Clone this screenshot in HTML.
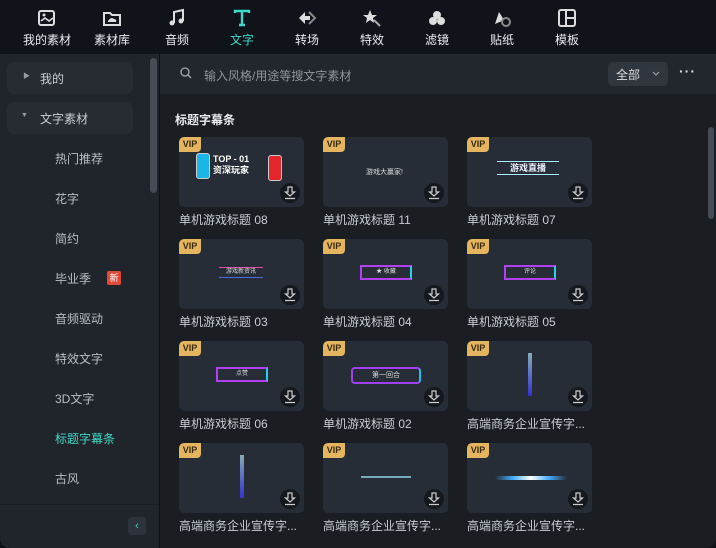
<!DOCTYPE html>
<html><head><meta charset="utf-8"><style>
*{margin:0;padding:0;box-sizing:border-box}
body{width:716px;height:548px;background:#0d1014;font-family:"Liberation Sans","Noto Sans CJK SC",sans-serif;position:relative;overflow:hidden;color:#cfd4da}
.top{position:absolute;left:0;top:0;width:716px;height:54px;background:#10141a}
.tab{position:absolute;top:0;width:60px;height:54px;text-align:center;font-size:12px;color:#e8ebee}
.tab .ic{position:absolute;left:50%;top:8px;transform:translateX(-50%)}
.tab span{position:absolute;left:0;right:0;top:31px}
.side{position:absolute;left:0;top:54px;width:159px;height:494px;background:#20252c;border-radius:0 0 0 10px}
.sb{position:absolute;left:7px;width:126px;height:32px;background:#272c33;border-radius:7px;font-size:12px;color:#c9ced4}
.item{position:absolute;left:55px;font-size:12px;color:#b8bec5}
.main{position:absolute;left:160px;top:54px;width:556px;height:494px;background:#1a1d21;border-radius:0 0 10px 0}
.search{position:absolute;left:0;top:0;width:556px;height:40px;background:#22272e}
.card{position:absolute;width:125px}
.th{width:125px;height:70px;background:#262d36;border-radius:5px;position:relative;overflow:hidden}
.vip{position:absolute;left:0;top:0;width:22px;height:15px;background:#e2b55e;border-radius:4px 0 4px 0;font-size:9px;font-weight:bold;color:#3a2a10;text-align:center;line-height:15px}
.dl{position:absolute;right:4px;bottom:4px;width:20px;height:20px;border-radius:50%;background:#15181c}
.dl svg{position:absolute;left:4px;top:3px}
.lb{font-size:12px;color:#c9ced4;margin-top:4px;white-space:nowrap}
</style></head><body>
<div class="top">
 <div class="tab" style="left:17px"><svg class="ic" width="20" height="20" viewBox="0 0 20 20"><rect x="2" y="3" width="15" height="14" rx="2" fill="none" stroke="#ddd" stroke-width="2"/><path d="M4 13 L8 10 L12 13 L16 10" stroke="#ddd" stroke-width="1.6" fill="none"/><circle cx="7" cy="7" r="1.5" fill="#ddd"/></svg><span>我的素材</span></div>
 <div class="tab" style="left:82px"><svg class="ic" width="20" height="20" viewBox="0 0 20 20"><path d="M2 5 h6 l2 2 h8 v10 h-16z" fill="none" stroke="#ddd" stroke-width="2"/><path d="M6 14 h8 a2 2 0 0 0 -2-3 a3 3 0 0 0 -5 1 a1.5 1.5 0 0 0 -1 2z" fill="#ddd"/></svg><span>素材库</span></div>
 <div class="tab" style="left:147px"><svg class="ic" width="20" height="20" viewBox="0 0 20 20"><path d="M7 15 V4 L16 2 V13" stroke="#ddd" stroke-width="2" fill="none"/><circle cx="5" cy="15" r="2.5" fill="#ddd"/><circle cx="14" cy="13" r="2.5" fill="#ddd"/></svg><span>音频</span></div>
 <div class="tab" style="left:212px;color:#3fd8c6"><svg class="ic" width="20" height="20" viewBox="0 0 20 20"><path d="M3 5 V3 H17 V5 M10 3 V17 M7 17 H13" stroke="#3fd8c6" stroke-width="2.4" fill="none"/></svg><span>文字</span></div>
 <div class="tab" style="left:277px"><svg class="ic" width="22" height="20" viewBox="0 0 22 20"><path d="M9 4 L3 10 L9 16 V12 H14 V8 H9z" fill="#ddd"/><path d="M13 4 L19 10 L13 16" stroke="#888" stroke-width="2" fill="none"/></svg><span>转场</span></div>
 <div class="tab" style="left:342px"><svg class="ic" width="20" height="20" viewBox="0 0 20 20"><path d="M8 2 L10 7 L15 7 L11 10 L12 15 L8 12 L4 15 L5 10 L1 7 L6 7z" fill="#ddd"/><path d="M12 12 L18 18" stroke="#aaa" stroke-width="2"/></svg><span>特效</span></div>
 <div class="tab" style="left:407px"><svg class="ic" width="20" height="20" viewBox="0 0 20 20"><circle cx="10" cy="7" r="4" fill="#ddd"/><circle cx="6" cy="13" r="4" fill="#ddd"/><circle cx="14" cy="13" r="4" fill="#ddd"/></svg><span>滤镜</span></div>
 <div class="tab" style="left:472px"><svg class="ic" width="20" height="20" viewBox="0 0 20 20"><path d="M3 16 L7 4 L12 12z" fill="#ddd"/><circle cx="14" cy="14" r="4" fill="none" stroke="#888" stroke-width="2"/></svg><span>贴纸</span></div>
 <div class="tab" style="left:537px"><svg class="ic" width="20" height="20" viewBox="0 0 20 20"><rect x="2" y="2" width="16" height="16" rx="2" fill="none" stroke="#ddd" stroke-width="2"/><path d="M9 2 V18 M9 10 H18" stroke="#ddd" stroke-width="2"/></svg><span>模板</span></div>
</div>
<div class="side">
 <div class="sb" style="top:8px"><span style="position:absolute;left:16px;top:9px;font-size:7px;color:#999">▶</span><span style="position:absolute;left:33px;top:8px">我的</span></div>
 <div class="sb" style="top:48px"><span style="position:absolute;left:14px;top:10px;font-size:7px;color:#999">▼</span><span style="position:absolute;left:33px;top:8px">文字素材</span></div>
 <div class="item" style="top:96px">热门推荐</div>
 <div class="item" style="top:136px">花字</div>
 <div class="item" style="top:176px">简约</div>
 <div class="item" style="top:216px">毕业季</div>
 <div style="position:absolute;left:107px;top:217px;width:14px;height:14px;background:#e04a3a;border-radius:2px;font-size:9px;color:#fff;text-align:center;line-height:14px">新</div>
 <div class="item" style="top:256px">音频驱动</div>
 <div class="item" style="top:296px">特效文字</div>
 <div class="item" style="top:336px">3D文字</div>
 <div class="item" style="top:376px;color:#3fd8c6">标题字幕条</div>
 <div class="item" style="top:416px">古风</div>
 <div style="position:absolute;left:0;top:450px;width:159px;height:1px;background:#1a1e23"></div>
 <div style="position:absolute;left:128px;top:463px;width:18px;height:18px;background:#2c333b;border-radius:4px;color:#3fd8c6;font-size:11px;text-align:center;line-height:18px">‹</div>
 <div style="position:absolute;left:150px;top:4px;width:7px;height:135px;background:#454c55;border-radius:4px"></div>
</div>
<div class="main">
 <div class="search">
  <svg style="position:absolute;left:20px;top:13px" width="12" height="12" viewBox="0 0 12 12"><circle cx="5" cy="5" r="4" fill="none" stroke="#aaa" stroke-width="1.3"/><path d="M8 8 L11 11" stroke="#aaa" stroke-width="1.3"/></svg>
  <span style="position:absolute;left:44px;top:13px;font-size:12px;color:#8d949c">输入风格/用途等搜文字素材</span>
  <div style="position:absolute;left:448px;top:8px;width:60px;height:24px;background:#30363e;border-radius:5px"><span style="position:absolute;left:8px;top:4px;font-size:12px;color:#ddd">全部</span><svg style="position:absolute;left:44px;top:9px" width="8" height="5" viewBox="0 0 8 5"><path d="M1 1 L4 4 L7 1" stroke="#aaa" fill="none"/></svg></div>
  <span style="position:absolute;left:519px;top:9px;font-size:14px;color:#ddd;letter-spacing:1px;font-weight:bold">···</span>
 </div>
 <div style="position:absolute;left:15px;top:57px;font-size:12px;font-weight:bold;color:#e8ebee">标题字幕条</div>
 <div style="position:absolute;left:548px;top:73px;width:6px;height:92px;background:#454c55;border-radius:3px"></div>
</div>
<div class="card" style="left:179px;top:137px"><div class="th"><div class="vip">VIP</div><div style="position:absolute;left:17px;top:16px;width:14px;height:26px;background:#19b7e8;border-radius:3px;border:1px solid #ccc"></div><div style="position:absolute;left:34px;top:17px;font-size:9px;font-weight:bold;color:#fff;line-height:11px">TOP - 01<br>资深玩家</div><div style="position:absolute;left:89px;top:18px;width:14px;height:26px;background:#e3262b;border-radius:3px;border:1px solid #ccc"></div><div class="dl"><svg width="12" height="14" viewBox="0 0 12 14"><path d="M4 1 H8 V6 H10.5 L6 10 L1.5 6 H4z" fill="none" stroke="#ccc" stroke-width="1.2"/><path d="M1 12.5 H11" stroke="#ccc" stroke-width="1.3"/></svg></div></div><div class="lb">单机游戏标题 08</div></div>
<div class="card" style="left:323px;top:137px"><div class="th"><div class="vip">VIP</div><div style="position:absolute;left:43px;top:30px;font-size:7px;color:#ddd">游戏大赢家!</div><div class="dl"><svg width="12" height="14" viewBox="0 0 12 14"><path d="M4 1 H8 V6 H10.5 L6 10 L1.5 6 H4z" fill="none" stroke="#ccc" stroke-width="1.2"/><path d="M1 12.5 H11" stroke="#ccc" stroke-width="1.3"/></svg></div></div><div class="lb">单机游戏标题 11</div></div>
<div class="card" style="left:467px;top:137px"><div class="th"><div class="vip">VIP</div><div style="position:absolute;left:30px;top:24px;width:62px;height:14px;border-top:1px solid #aef;border-bottom:1px solid #aef;font-size:9px;color:#eef;text-align:center;line-height:12px;font-weight:bold">游戏直播</div><div class="dl"><svg width="12" height="14" viewBox="0 0 12 14"><path d="M4 1 H8 V6 H10.5 L6 10 L1.5 6 H4z" fill="none" stroke="#ccc" stroke-width="1.2"/><path d="M1 12.5 H11" stroke="#ccc" stroke-width="1.3"/></svg></div></div><div class="lb">单机游戏标题 07</div></div>
<div class="card" style="left:179px;top:239px"><div class="th"><div class="vip">VIP</div><div style="position:absolute;left:40px;top:28px;width:44px;height:11px;border-top:1px solid #e04ab0;border-bottom:1px solid #4a6ae0;font-size:6px;color:#ddd;text-align:center;line-height:9px">游戏新资讯</div><div class="dl"><svg width="12" height="14" viewBox="0 0 12 14"><path d="M4 1 H8 V6 H10.5 L6 10 L1.5 6 H4z" fill="none" stroke="#ccc" stroke-width="1.2"/><path d="M1 12.5 H11" stroke="#ccc" stroke-width="1.3"/></svg></div></div><div class="lb">单机游戏标题 03</div></div>
<div class="card" style="left:323px;top:239px"><div class="th"><div class="vip">VIP</div><div style="position:absolute;left:37px;top:26px;width:52px;height:15px;border:2px solid #b040f0;border-right-color:#20d0f0;font-size:6px;color:#ddd;text-align:center;line-height:11px">★ 收藏</div><div class="dl"><svg width="12" height="14" viewBox="0 0 12 14"><path d="M4 1 H8 V6 H10.5 L6 10 L1.5 6 H4z" fill="none" stroke="#ccc" stroke-width="1.2"/><path d="M1 12.5 H11" stroke="#ccc" stroke-width="1.3"/></svg></div></div><div class="lb">单机游戏标题 04</div></div>
<div class="card" style="left:467px;top:239px"><div class="th"><div class="vip">VIP</div><div style="position:absolute;left:37px;top:26px;width:52px;height:15px;border:2px solid #b040f0;border-right-color:#20d0f0;font-size:6px;color:#ddd;text-align:center;line-height:11px">评论</div><div class="dl"><svg width="12" height="14" viewBox="0 0 12 14"><path d="M4 1 H8 V6 H10.5 L6 10 L1.5 6 H4z" fill="none" stroke="#ccc" stroke-width="1.2"/><path d="M1 12.5 H11" stroke="#ccc" stroke-width="1.3"/></svg></div></div><div class="lb">单机游戏标题 05</div></div>
<div class="card" style="left:179px;top:341px"><div class="th"><div class="vip">VIP</div><div style="position:absolute;left:37px;top:26px;width:52px;height:15px;border:2px solid #b040f0;border-right-color:#20d0f0;font-size:6px;color:#ddd;text-align:center;line-height:11px">点赞</div><div class="dl"><svg width="12" height="14" viewBox="0 0 12 14"><path d="M4 1 H8 V6 H10.5 L6 10 L1.5 6 H4z" fill="none" stroke="#ccc" stroke-width="1.2"/><path d="M1 12.5 H11" stroke="#ccc" stroke-width="1.3"/></svg></div></div><div class="lb">单机游戏标题 06</div></div>
<div class="card" style="left:323px;top:341px"><div class="th"><div class="vip">VIP</div><div style="position:absolute;left:28px;top:26px;width:70px;height:17px;border:2px solid #a040f0;border-right-color:#20c0f0;border-radius:4px;font-size:7px;color:#ddd;text-align:center;line-height:13px">第一回合</div><div class="dl"><svg width="12" height="14" viewBox="0 0 12 14"><path d="M4 1 H8 V6 H10.5 L6 10 L1.5 6 H4z" fill="none" stroke="#ccc" stroke-width="1.2"/><path d="M1 12.5 H11" stroke="#ccc" stroke-width="1.3"/></svg></div></div><div class="lb">单机游戏标题 02</div></div>
<div class="card" style="left:467px;top:341px"><div class="th"><div class="vip">VIP</div><div style="position:absolute;left:61px;top:12px;width:4px;height:43px;background:linear-gradient(#8ab,#33c)"></div><div class="dl"><svg width="12" height="14" viewBox="0 0 12 14"><path d="M4 1 H8 V6 H10.5 L6 10 L1.5 6 H4z" fill="none" stroke="#ccc" stroke-width="1.2"/><path d="M1 12.5 H11" stroke="#ccc" stroke-width="1.3"/></svg></div></div><div class="lb">高端商务企业宣传字...</div></div>
<div class="card" style="left:179px;top:443px"><div class="th"><div class="vip">VIP</div><div style="position:absolute;left:61px;top:12px;width:4px;height:43px;background:linear-gradient(#8ab,#33c)"></div><div class="dl"><svg width="12" height="14" viewBox="0 0 12 14"><path d="M4 1 H8 V6 H10.5 L6 10 L1.5 6 H4z" fill="none" stroke="#ccc" stroke-width="1.2"/><path d="M1 12.5 H11" stroke="#ccc" stroke-width="1.3"/></svg></div></div><div class="lb">高端商务企业宣传字...</div></div>
<div class="card" style="left:323px;top:443px"><div class="th"><div class="vip">VIP</div><div style="position:absolute;left:38px;top:33px;width:50px;height:2px;background:#7ab"></div><div class="dl"><svg width="12" height="14" viewBox="0 0 12 14"><path d="M4 1 H8 V6 H10.5 L6 10 L1.5 6 H4z" fill="none" stroke="#ccc" stroke-width="1.2"/><path d="M1 12.5 H11" stroke="#ccc" stroke-width="1.3"/></svg></div></div><div class="lb">高端商务企业宣传字...</div></div>
<div class="card" style="left:467px;top:443px"><div class="th"><div class="vip">VIP</div><div style="position:absolute;left:28px;top:33px;width:72px;height:4px;background:linear-gradient(90deg,transparent,#4af,#fff,#4af,transparent)"></div><div class="dl"><svg width="12" height="14" viewBox="0 0 12 14"><path d="M4 1 H8 V6 H10.5 L6 10 L1.5 6 H4z" fill="none" stroke="#ccc" stroke-width="1.2"/><path d="M1 12.5 H11" stroke="#ccc" stroke-width="1.3"/></svg></div></div><div class="lb">高端商务企业宣传字...</div></div>
</body></html>
